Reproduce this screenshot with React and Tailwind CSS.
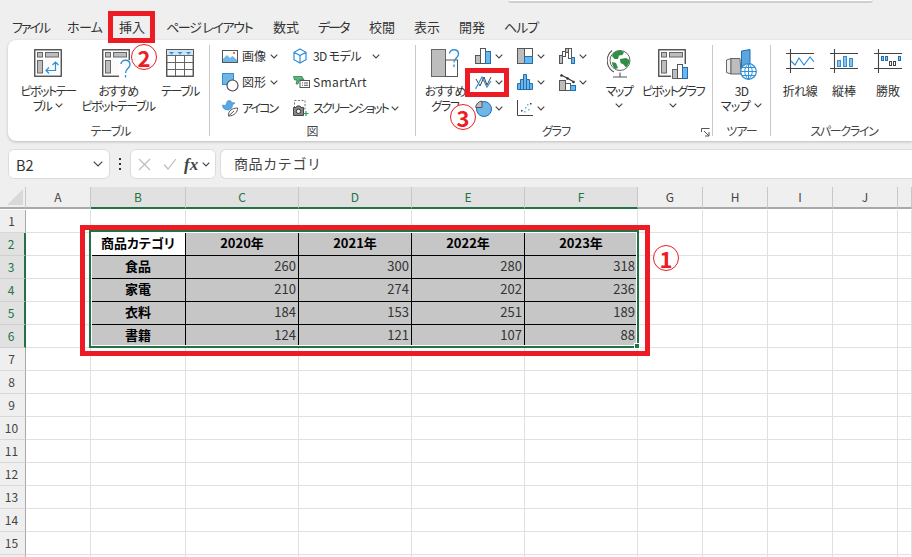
import React from 'react';

// width is the distance to the next tab, since the kana in the reference is condensed
const TABS = [
    { label: 'ファイル', width: 'w-[55px]', spacing: 'tracking-[-2px]' },
    { label: 'ホーム', width: 'w-[52px]', spacing: 'tracking-[-0.6px]' },
    { label: '挿入', width: 'w-[47px]', spacing: 'tracking-normal' },
    { label: 'ページ レイアウト', width: 'w-[107px]', spacing: 'tracking-[-1.3px]' },
    { label: '数式', width: 'w-[45px]', spacing: 'tracking-normal' },
    { label: 'データ', width: 'w-[51px]', spacing: 'tracking-[-2px]' },
    { label: '校閲', width: 'w-[45px]', spacing: 'tracking-normal' },
    { label: '表示', width: 'w-[45px]', spacing: 'tracking-normal' },
    { label: '開発', width: 'w-[45px]', spacing: 'tracking-normal' },
    { label: 'ヘルプ', width: 'w-[40px]', spacing: 'tracking-[-1px]' },
];
const COLS = ['A', 'B', 'C', 'D', 'E', 'F', 'G', 'H', 'I', 'J', ''];
const TABLE = {
    2: ['商品カテゴリ', '2020年', '2021年', '2022年', '2023年'],
    3: ['食品', 260, 300, 280, 318],
    4: ['家電', 210, 274, 202, 236],
    5: ['衣料', 184, 153, 251, 189],
    6: ['書籍', 124, 121, 107, 88],
};
const SELECTED_COLS = ['B', 'C', 'D', 'E', 'F'];
const BLUE = '#2e8fd8';
const GRAY = '#bdbdbd';

function Chevron({ className = '' }) {
    return (
        <svg width="8" height="5" viewBox="0 0 8 5" className={className}>
            <polyline points="0.7,0.7 4,4 7.3,0.7" fill="none" stroke="#444" strokeWidth="1.1" />
        </svg>
    );
}

function Question({ x = 0, y = 0 }) {
    return (
        <path
            d={`M${x} ${y + 4} c0 -5 9 -5 9 0.5 c0 4 -4.5 4 -4.5 8.5 M${x + 4.5} ${y + 15} v2.5`}
            fill="none"
            stroke={BLUE}
            strokeWidth="1.4"
        />
    );
}

function PivotFrame() {
    return (
        <>
            <rect x="0.75" y="0.75" width="26.5" height="26.5" fill="#fbfbfb" stroke="#444" strokeWidth="1.3" />
            <rect x="3.5" y="3.5" width="5" height="4.5" fill={GRAY} stroke="#666" />
            <rect x="11.5" y="3.5" width="13" height="4.5" fill={GRAY} stroke="#666" />
            <rect x="3.5" y="11.5" width="5" height="12.5" fill={GRAY} stroke="#666" />
        </>
    );
}

function PivotIcon() {
    return (
        <svg width="28" height="28" viewBox="0 0 28 28">
            <PivotFrame />
            <path d="M21.5 13 V21.5 H12 M18.5 16 L21.5 13 L24.5 16 M15 18.5 L12 21.5 L15 24.5" fill="none" stroke={BLUE} strokeWidth="1.2" />
        </svg>
    );
}

function RecommendedPivotIcon() {
    return (
        <svg width="32" height="33" viewBox="0 0 32 33" className="overflow-visible">
            <PivotFrame />
            <rect x="17" y="11" width="13" height="21" fill="#fff" />
            <Question x={19} y={11} />
        </svg>
    );
}

function TableIcon() {
    return (
        <svg width="28" height="28" viewBox="0 0 28 28">
            <rect x="0.75" y="0.75" width="26.5" height="26.5" fill="#fff" stroke="#444" strokeWidth="1.3" />
            <rect x="1" y="1" width="26" height="5" fill="#cfe4f5" />
            <path d="M3 3 h5 l-2.5 2.5z M11.5 3 h5 l-2.5 2.5z M20 3 h5 l-2.5 2.5z" fill={BLUE} />
            <path d="M1 6.5 H27 M1 13.5 H27 M1 20.5 H27 M9.5 6.5 V27 M18.5 6.5 V27" stroke="#666" fill="none" />
        </svg>
    );
}

function ImageIcon() {
    return (
        <svg width="16" height="13" viewBox="0 0 16 13">
            <rect x="0.5" y="0.5" width="15" height="12" fill="#fff" stroke="#555" />
            <path d="M1 12 V9 L5 5 L8 8 L10.5 6 L15 10 V12 Z" fill="#6fb5e6" />
            <rect x="11" y="2" width="2" height="2" fill="#e8792b" />
        </svg>
    );
}

function ShapesIcon() {
    return (
        <svg width="17" height="19" viewBox="0 0 17 19">
            <rect x="0.5" y="0.5" width="11" height="11" fill="#6fb5e6" stroke={BLUE} />
            <circle cx="10.5" cy="12.5" r="5.5" fill="#fff" stroke="#444" strokeWidth="1.1" />
        </svg>
    );
}

function StickerIcon() {
    return (
        <svg width="17" height="17" viewBox="0 0 17 17">
            <path d="M5 1.5 a3 3 0 0 1 5 1 l3 0.5 l-2.5 2 c0 3 -2 5 -5 5 c-3 0 -5 -2 -5 -5 l3 0.5 c0.5 -1 1 -2.5 1.5 -4z" fill="#5aa6de" stroke={BLUE} strokeWidth="0.6" />
            <path d="M6.5 16 C6 11 10 8 15.5 8 C16 12 12 16 6.5 16 Z M6.5 16 L12 11" fill="#fff" stroke="#555" />
        </svg>
    );
}

function CubeIcon() {
    return (
        <svg width="14" height="16" viewBox="0 0 14 16">
            <path d="M7 1 L13 4.3 V11.7 L7 15 L1 11.7 V4.3 Z M1 4.3 L7 7.6 L13 4.3 M7 7.6 V15" fill="none" stroke={BLUE} strokeWidth="1.2" />
        </svg>
    );
}

function SmartArtIcon() {
    return (
        <svg width="17" height="12" viewBox="0 0 17 12">
            <path d="M0.5 0.5 H9 L11 4 H6 L5 8 H3 L4 4 H1.5 Z" fill="#5cb87a" stroke="#217346" strokeWidth="0.7" />
            <rect x="7" y="4.5" width="9.5" height="7" fill="#fff" stroke="#555" />
            <path d="M9 7 h1 M11 7 h4 M9 9.3 h1 M11 9.3 h4" stroke="#555" fill="none" />
        </svg>
    );
}

function ScreenshotIcon() {
    return (
        <svg width="16" height="16" viewBox="0 0 16 16">
            <rect x="1.5" y="0.5" width="10.5" height="9" fill="none" stroke="#777" strokeDasharray="2 1.5" />
            <path d="M0.5 7.5 H3 L4 6 H7 L8 7.5 H10.5 V15.5 H0.5 Z" fill="#888" stroke="#444" />
            <circle cx="5.5" cy="11.3" r="2.2" fill="#eee" stroke="#333" />
            <path d="M13 11 V16 M10.5 13.5 H15.5" stroke="#2e9e5b" strokeWidth="1.2" />
        </svg>
    );
}

function RecommendedChartIcon() {
    return (
        <svg width="29" height="28" viewBox="0 0 29 28">
            <rect x="0.5" y="0.5" width="14" height="27" fill={GRAY} stroke="#666" />
            <rect x="14.5" y="11" width="12" height="16.5" fill="#fff" stroke="#555" />
            <Question x={18.5} y={0.5} />
        </svg>
    );
}

function ColumnChartIcon() {
    return (
        <svg width="16" height="16" viewBox="0 0 16 16">
            <rect x="0.5" y="7.5" width="5" height="8" fill={GRAY} stroke="#555" />
            <rect x="5.5" y="0.5" width="5" height="15" fill="#fff" stroke="#555" />
            <rect x="10.5" y="3.5" width="5" height="12" fill="#6fb5e6" stroke="#1f6fb5" />
        </svg>
    );
}

function LineChartIcon() {
    return (
        <svg width="17" height="17" viewBox="0 0 17 17">
            <path d="M1 5 L5 12 L9 3 L12 11 L16 3" fill="none" stroke="#444" strokeWidth="1" />
            <path d="M0.5 15 L7 3 L12 13 L16 7" fill="none" stroke={BLUE} strokeWidth="1.2" />
        </svg>
    );
}

function PieChartIcon() {
    return (
        <svg width="17" height="17" viewBox="0 0 17 17">
            <circle cx="9" cy="9" r="7.5" fill="#6fb5e6" stroke="#1f6fb5" />
            <path d="M7 1 V7.5 H0.7 C1 4 3.5 1.3 7 1 Z" fill={GRAY} stroke="#555" />
        </svg>
    );
}

function TreemapIcon() {
    return (
        <svg width="16" height="16" viewBox="0 0 16 16">
            <rect x="0.5" y="0.5" width="7" height="15" fill={GRAY} stroke="#555" />
            <rect x="7.5" y="0.5" width="8" height="8" fill="#fff" stroke="#555" />
            <rect x="7.5" y="8.5" width="8" height="7" fill="#6fb5e6" stroke="#1f6fb5" />
        </svg>
    );
}

function HistogramIcon() {
    return (
        <svg width="16" height="16" viewBox="0 0 16 16">
            <path d="M0.5 15.5 V9.5 H3.5 V5.5 H6.5 V0.5 H9.5 V5.5 H12.5 V9.5 H15.5 V15.5 Z M3.5 9.5 V15.5 M6.5 5.5 V15.5 M9.5 5.5 V15.5 M12.5 9.5 V15.5" fill="#6fb5e6" stroke="#1f6fb5" />
        </svg>
    );
}

function ScatterIcon() {
    return (
        <svg width="16" height="16" viewBox="0 0 16 16">
            <path d="M0.5 0 V15.5 H16" fill="none" stroke="#444" />
            <rect x="4" y="10" width="1.5" height="1.5" fill="#333" />
            <rect x="8" y="7" width="1.5" height="1.5" fill="#6fb5e6" />
            <rect x="11" y="9" width="1.5" height="1.5" fill="#6fb5e6" />
            <rect x="7" y="11" width="1.5" height="1.5" fill="#6fb5e6" />
            <rect x="13" y="3" width="1.5" height="1.5" fill="#333" />
            <rect x="10" y="4" width="1.5" height="1.5" fill="#6fb5e6" />
        </svg>
    );
}

function WaterfallIcon() {
    return (
        <svg width="16" height="16" viewBox="0 0 16 16">
            <rect x="0.5" y="7.5" width="3" height="8" fill={GRAY} stroke="#555" />
            <rect x="3.5" y="3.5" width="3" height="5" fill="#fff" stroke="#555" />
            <rect x="6.5" y="0.5" width="3" height="4" fill={GRAY} stroke="#555" />
            <rect x="9.5" y="0.5" width="3" height="10" fill="#fff" stroke="#555" />
            <rect x="12.5" y="9.5" width="3" height="6" fill="#6fb5e6" stroke="#1f6fb5" />
        </svg>
    );
}

function ComboIcon() {
    return (
        <svg width="17" height="17" viewBox="0 0 17 17">
            <rect x="0.5" y="6.5" width="6" height="10" fill={GRAY} stroke="#555" />
            <rect x="6.5" y="9.5" width="5" height="7" fill="#fff" stroke="#555" />
            <rect x="11.5" y="11.5" width="5" height="5" fill="#6fb5e6" stroke="#1f6fb5" />
            <path d="M2 1 L8 4 L15 8" fill="none" stroke="#333" strokeWidth="1.1" />
            <circle cx="2.5" cy="1.5" r="1.3" fill="#333" />
            <circle cx="8.5" cy="4.5" r="1.3" fill="#333" />
            <circle cx="14.5" cy="8" r="1.3" fill="#333" />
        </svg>
    );
}

function GlobeIcon() {
    return (
        <svg width="24" height="29" viewBox="0 0 24 29">
            <circle cx="13" cy="11.5" r="10" fill="#fff" stroke="#666" />
            <path d="M7 3.5 C10 1.5 14 1 17 3 L15.5 6 L12 6.5 L11 10 L7.5 10 L5 7 Z" fill="#2f8f46" />
            <path d="M13 10 L19 9 L22.5 11 C22.5 14 21 17 19 18.5 L16.5 15.5 L13.5 14 Z" fill="#2f8f46" />
            <path d="M5 13 L9 14 L11 19 L8.5 20 C6.5 18.5 5 16 5 13 Z" fill="#2f8f46" />
            <path d="M5 1.5 A13 13 0 0 0 7 23 M13 23.5 V27.5 M6 28 H20" fill="none" stroke="#555" strokeWidth="1.1" />
        </svg>
    );
}

function PivotChartIcon() {
    return (
        <svg width="30" height="30" viewBox="0 0 30 30">
            <PivotFrame />
            <rect x="13" y="15" width="16.5" height="15" fill="#fff" />
            <rect x="14.5" y="20.5" width="5" height="9" fill={GRAY} stroke="#666" />
            <rect x="19.5" y="15.5" width="5" height="14" fill="#fff" stroke="#555" />
            <rect x="24.5" y="18.5" width="5" height="11" fill="#6fb5e6" stroke="#1f6fb5" />
        </svg>
    );
}

function Map3dIcon() {
    return (
        <svg width="31" height="31" viewBox="0 0 31 31">
            <path d="M0.5 11 L5 9.5 V25 L0.5 23.5 Z" fill="#eee" stroke="#666" />
            <path d="M5 9.5 L14 9.5 L15 25 L5 25 Z" fill={GRAY} stroke="#666" />
            <path d="M15.5 2 L24 0.5 V15 L15.5 25 Z" fill="#5aa6de" stroke="#1f6fb5" />
            <circle cx="22.5" cy="22.5" r="7.8" fill="#fff" stroke={BLUE} strokeWidth="1.2" />
            <path d="M14.7 22.5 H30.3 M16 18.5 H29 M16 26.5 H29 M22.5 14.7 V30.3 M22.5 14.7 C17.5 19 17.5 26 22.5 30.3 M22.5 14.7 C27.5 19 27.5 26 22.5 30.3" fill="none" stroke={BLUE} />
        </svg>
    );
}

function SparkFrame({ children }) {
    return (
        <svg width="28" height="24" viewBox="0 0 28 24">
            <path d="M0 4.5 H28 M0 19.5 H28 M4.5 0 V24" stroke="#444" strokeWidth="1.1" fill="none" />
            {children}
        </svg>
    );
}

function Sparkline({ type }) {
    if (type === 'line') {
        return (
            <SparkFrame>
                <path d="M5 12 L9 16 L13 9 L18 16 L24 8 L28 13" fill="none" stroke={BLUE} strokeWidth="1.1" />
            </SparkFrame>
        );
    }
    if (type === 'column') {
        return (
            <SparkFrame>
                <rect x="7.5" y="11.5" width="3" height="6" fill="#8cc3ea" stroke={BLUE} />
                <rect x="13.5" y="7.5" width="3" height="10" fill="#8cc3ea" stroke={BLUE} />
                <rect x="19.5" y="9.5" width="3" height="8" fill="#8cc3ea" stroke={BLUE} />
            </SparkFrame>
        );
    }
    return (
        <SparkFrame>
            <rect x="7.5" y="7.5" width="2" height="4" fill="#8cc3ea" stroke="#1f6fb5" />
            <rect x="11.5" y="7.5" width="2" height="4" fill="#8cc3ea" stroke="#1f6fb5" />
            <rect x="15.5" y="12.5" width="2" height="4" fill="#fff" stroke="#444" />
            <rect x="19.5" y="12.5" width="2" height="4" fill="#fff" stroke="#444" />
            <rect x="24.5" y="7.5" width="2" height="4" fill="#8cc3ea" stroke="#1f6fb5" />
        </SparkFrame>
    );
}

function Sep() {
    return <div className="w-px my-[5px] bg-[#c9c9c9] shrink-0" />;
}

function Group({ label, className = '', labelClass = '', children, extra }) {
    return (
        <div className={`flex flex-col shrink-0 ${className}`}>
            <div className="flex h-[81px]">{children}</div>
            <div className={`relative flex-1 flex items-center justify-center text-[12px] text-[#444] ${labelClass}`}>
                {label}
                {extra}
            </div>
        </div>
    );
}

function LargeButton({ width, icon, lines, chevron, chevronBelow, spacing = 'tracking-[-1.5px]' }) {
    return (
        <div className={`flex flex-col items-center pt-[9px] shrink-0 ${width}`}>
            <div className="h-[34px] flex items-start justify-center">{icon}</div>
            <div className={`leading-[15px] text-[12px] text-center whitespace-nowrap text-[#333] ${spacing}`}>
                {lines.map((line, i) => (
                    <div key={i} className="flex items-center justify-center gap-[4px] h-[15px]">
                        {line}
                        {chevron && i === lines.length - 1 && <Chevron />}
                    </div>
                ))}
                {chevronBelow && <div className="flex justify-center h-[15px] items-center"><Chevron /></div>}
            </div>
        </div>
    );
}

function SmallButton({ icon, label, gap = 'ml-[4px]', chevron = true, spacing = 'tracking-normal' }) {
    return (
        <div className="flex items-center h-[26px] text-[12px] text-[#333] whitespace-nowrap">
            <div className="w-[20px] flex items-center">{icon}</div>
            <span className={spacing}>{label}</span>
            {chevron && <Chevron className={gap} />}
        </div>
    );
}

function ChartButton({ icon }) {
    return (
        <div className="flex items-center h-[26px] w-[42px]">
            <div className="w-[20px] flex items-center">{icon}</div>
            <Chevron />
        </div>
    );
}

function Ribbon() {
    return (
        <div className="ml-2 h-[101px] bg-white rounded-l-lg shadow-[0_1px_3px_rgba(0,0,0,0.22)] flex">
            <Group label="テーブル" className="w-[201px]" labelClass="pl-[4px] tracking-[-1px]">
                <div className="w-[3px]" />
                <LargeButton width="w-[74px]" icon={<PivotIcon />} lines={['ピボットテー', 'ブル']} chevron />
                <LargeButton width="w-[66px]" icon={<RecommendedPivotIcon />} lines={['おすすめ', 'ピボットテーブル']} />
                <LargeButton width="w-[58px]" icon={<TableIcon />} lines={['テーブル']} />
            </Group>
            <Sep />
            <Group label="図" className="w-[205px]">
                <div className="pl-[12px] pt-[3px] w-[83px]">
                    <SmallButton icon={<ImageIcon />} label="画像" gap="ml-[4px]" />
                    <SmallButton icon={<ShapesIcon />} label="図形" gap="ml-[4px]" />
                    <SmallButton icon={<StickerIcon />} label="アイコン" chevron={false} spacing="tracking-[-2px]" />
                </div>
                <div className="pt-[3px]">
                    <SmallButton icon={<CubeIcon />} label="3D モデル" gap="ml-[11px]" spacing="tracking-[-0.6px]" />
                    <SmallButton icon={<SmartArtIcon />} label="SmartArt" chevron={false} spacing="tracking-[0.4px]" />
                    <SmallButton icon={<ScreenshotIcon />} label="スクリーンショット" gap="ml-[3px]" spacing="tracking-[-1.9px]" />
                </div>
            </Group>
            <Sep />
            <Group
                label="グラフ"
                className="w-[296px]"
                labelClass="pr-[16px] tracking-[-1px]"
                extra={
                    <svg width="9" height="9" viewBox="0 0 9 9" className="absolute right-[2px] top-[7px]">
                        <path d="M0.5 4 V0.5 H8.5 M3 3 L8 8 M4 8 H8 V4" fill="none" stroke="#555" />
                    </svg>
                }
            >
                <LargeButton width="w-[58px]" icon={<RecommendedChartIcon />} lines={['おすすめ', 'グラフ']} spacing="tracking-[-1.2px]" />
                <div className="w-px" />
                <div className="pt-[3px]">
                    <ChartButton icon={<ColumnChartIcon />} />
                    <ChartButton icon={<LineChartIcon />} />
                    <ChartButton icon={<PieChartIcon />} />
                </div>
                <div className="pt-[3px]">
                    <ChartButton icon={<TreemapIcon />} />
                    <ChartButton icon={<HistogramIcon />} />
                    <ChartButton icon={<ScatterIcon />} />
                </div>
                <div className="pt-[3px]">
                    <ChartButton icon={<WaterfallIcon />} />
                    <ChartButton icon={<ComboIcon />} />
                </div>
                <LargeButton width="w-[36px]" icon={<GlobeIcon />} lines={['マップ']} chevronBelow />
                <LargeButton width="w-[72px]" icon={<PivotChartIcon />} lines={['ピボットグラフ']} chevronBelow />
            </Group>
            <Sep />
            <Group label="ツアー" className="w-[57px]" labelClass="tracking-[-1px]">
                <LargeButton width="w-[57px]" icon={<Map3dIcon />} lines={['3D', 'マップ']} chevron spacing="tracking-[-0.6px]" />
            </Group>
            <Sep />
            <Group label="スパークライン" className="flex-1" labelClass="tracking-[-1.3px] pl-[5px]">
                <div className="w-[7px]" />
                <LargeButton width="w-[44px]" icon={<Sparkline type="line" />} lines={['折れ線']} spacing="tracking-[-0.5px]" />
                <LargeButton width="w-[44px]" icon={<Sparkline type="column" />} lines={['縦棒']} spacing="tracking-normal" />
                <LargeButton width="w-[44px]" icon={<Sparkline type="winloss" />} lines={['勝敗']} spacing="tracking-normal" />
            </Group>
        </div>
    );
}

function FormulaBar() {
    return (
        <div className="mt-2 h-[30px] flex">
            <div className="ml-2 w-[102px] bg-white border border-[#dcdcdc] rounded-md flex items-center justify-between pl-[7px] pr-[6px] text-[14.5px] text-[#333]">
                <span className="pt-[2px]">B2</span>
                <svg width="10" height="6" viewBox="0 0 10 6">
                    <polyline points="0.7,0.7 5,5 9.3,0.7" fill="none" stroke="#444" strokeWidth="1.2" />
                </svg>
            </div>
            <div className="w-[20px] flex flex-col items-center justify-center gap-[3px]">
                <div className="w-[2px] h-[2px] bg-[#333]" />
                <div className="w-[2px] h-[2px] bg-[#333]" />
                <div className="w-[2px] h-[2px] bg-[#333]" />
            </div>
            <div className="w-[86px] bg-white border border-[#dcdcdc] rounded-md flex items-center pl-[7px]">
                <svg width="13" height="13" viewBox="0 0 13 13">
                    <path d="M1 1 L12 12 M12 1 L1 12" stroke="#bdbdbd" strokeWidth="1.2" />
                </svg>
                <svg width="14" height="12" viewBox="0 0 14 12" className="ml-[12px]">
                    <path d="M1 6.5 L5 11 L13 1" fill="none" stroke="#bdbdbd" strokeWidth="1.2" />
                </svg>
                <span className="ml-[7px] w-[17px] text-[17px] leading-none font-bold italic text-[#444] [font-family:'Liberation_Serif',serif]">fx</span>
                <Chevron className="ml-[1px]" />
            </div>
            <div className="ml-[4px] flex-1 bg-white border border-[#dcdcdc] border-r-0 rounded-l-md flex items-center pl-[13px] pb-[1px] text-[14px] tracking-[0.6px] text-[#444] [font-feature-settings:normal]">
                商品カテゴリ
            </div>
        </div>
    );
}

function ColumnHeader() {
    return (
        <>
            <div className="h-[22px] bg-[#efefef] border-r border-b-2 border-r-[#c8c8c8] border-b-[#a9a9a9] flex items-end justify-end pr-[2px] pb-[2px]">
                <svg width="16" height="16" viewBox="0 0 16 16">
                    <path d="M16 0 V16 H0 Z" fill="#d9d9d9" />
                </svg>
            </div>
            {COLS.map(col => {
                const on = SELECTED_COLS.includes(col);
                return (
                    <div
                        key={col}
                        className={`h-[22px] border-r border-b-2 border-r-[#c8c8c8] flex items-center justify-center text-[12px] ${on ? 'bg-[#e1e1e1] border-b-[#217346] text-[#217346]' : 'bg-[#efefef] border-b-[#a9a9a9] text-[#444]'}`}
                    >
                        {col}
                    </div>
                );
            })}
        </>
    );
}

function DataCell({ row, col }) {
    const index = SELECTED_COLS.indexOf(col);
    const values = TABLE[row];
    if (!values || index < 0) {
        return <div className="border-r border-b border-[#e0e0e0]" />;
    }
    const value = values[index];
    const isLabel = row === 2 || index === 0;
    const fill = row === 2 && index === 0 ? 'bg-white' : 'bg-[#c6c6c6]';
    return (
        <div
            className={`border-r border-b border-black flex items-center pb-[3px] text-[13px] ${fill} ${isLabel ? 'justify-center font-bold text-black' : 'justify-end pr-[2px] text-[#333]'}`}
        >
            {value}
        </div>
    );
}

function Sheet() {
    const rows = Array.from({ length: 16 }, (_, i) => i + 1);
    return (
        <div className="mt-2 grid grid-cols-[26px_65px_95px_113px_113px_113px_113px_65px_65px_65px_65px_14px] auto-rows-[23px] bg-white">
            <ColumnHeader />
            {rows.map(row => {
                const on = row >= 2 && row <= 6;
                return (
                    <React.Fragment key={row}>
                        <div
                            className={`flex items-center justify-center text-[12px] border-b pr-[2px] pb-[1px] ${on ? 'bg-[#e1e1e1] text-[#217346] border-b-[#d0d0d0] border-r-2 border-r-[#217346]' : 'bg-[#efefef] text-[#444] border-b-[#d8d8d8] border-r border-r-[#a9a9a9]'}`}
                        >
                            {row <= 15 ? row : ''}
                        </div>
                        {COLS.map(col => (
                            <DataCell key={col} row={row} col={col} />
                        ))}
                    </React.Fragment>
                );
            })}
        </div>
    );
}

function Circled({ n, className }) {
    return (
        <div className={`absolute w-[26px] h-[26px] rounded-full bg-white border border-[#ed1c24] flex items-center justify-center text-[22px] leading-none font-bold text-[#ed1c24] ${className}`}>
            {n}
        </div>
    );
}

export default function App() {
    return (
        <div className="relative w-[912px] h-[557px] overflow-hidden bg-[#efefef] text-[#333] [font-family:'Noto_Sans_CJK_JP','Noto_Sans',sans-serif] [font-feature-settings:'palt']">
            {/* leftover of the title bar search box */}
            <div className="ml-[508px] w-[365px] h-[3px] bg-white border-b-2 border-[#cfcfcf] rounded-b" />

            <div className="h-[37px] flex items-end pl-[12px] text-[13px] text-[#333]">
                {TABS.map(tab => (
                    <div key={tab.label} className={`relative shrink-0 h-[26px] flex items-center whitespace-nowrap ${tab.width}`}>
                        <span className={`relative ${tab.spacing}`}>
                            {tab.label}
                            {tab.label === '挿入' && <span className="absolute left-0 right-0 bottom-[-3px] h-[2px] bg-[#217346]" />}
                        </span>
                    </div>
                ))}
            </div>

            <Ribbon />
            <FormulaBar />
            <Sheet />

            {/* selection outline */}
            <div className="absolute left-[89px] top-[230px] w-[550px] h-[118px] border-2 border-[#217346]">
                <div className="w-full h-full border border-white" />
                <div className="absolute right-[-3px] bottom-[-3px] w-[6px] h-[6px] bg-[#217346] border border-white" />
            </div>

            {/* red annotations */}
            <div className="absolute left-[108px] top-[11px] w-[47px] h-[32px] border-[5px] border-[#ed1c24]" />
            <div className="absolute left-[465px] top-[68px] w-[44px] h-[29px] border-[5px] border-[#ed1c24]" />
            <div className="absolute left-[80px] top-[225px] w-[570px] h-[131px] border-[5px] border-[#ed1c24]" />
            <Circled n="2" className="left-[131px] top-[44px]" />
            <Circled n="3" className="left-[450px] top-[104px]" />
            <Circled n="1" className="left-[653px] top-[245px]" />
        </div>
    );
}
